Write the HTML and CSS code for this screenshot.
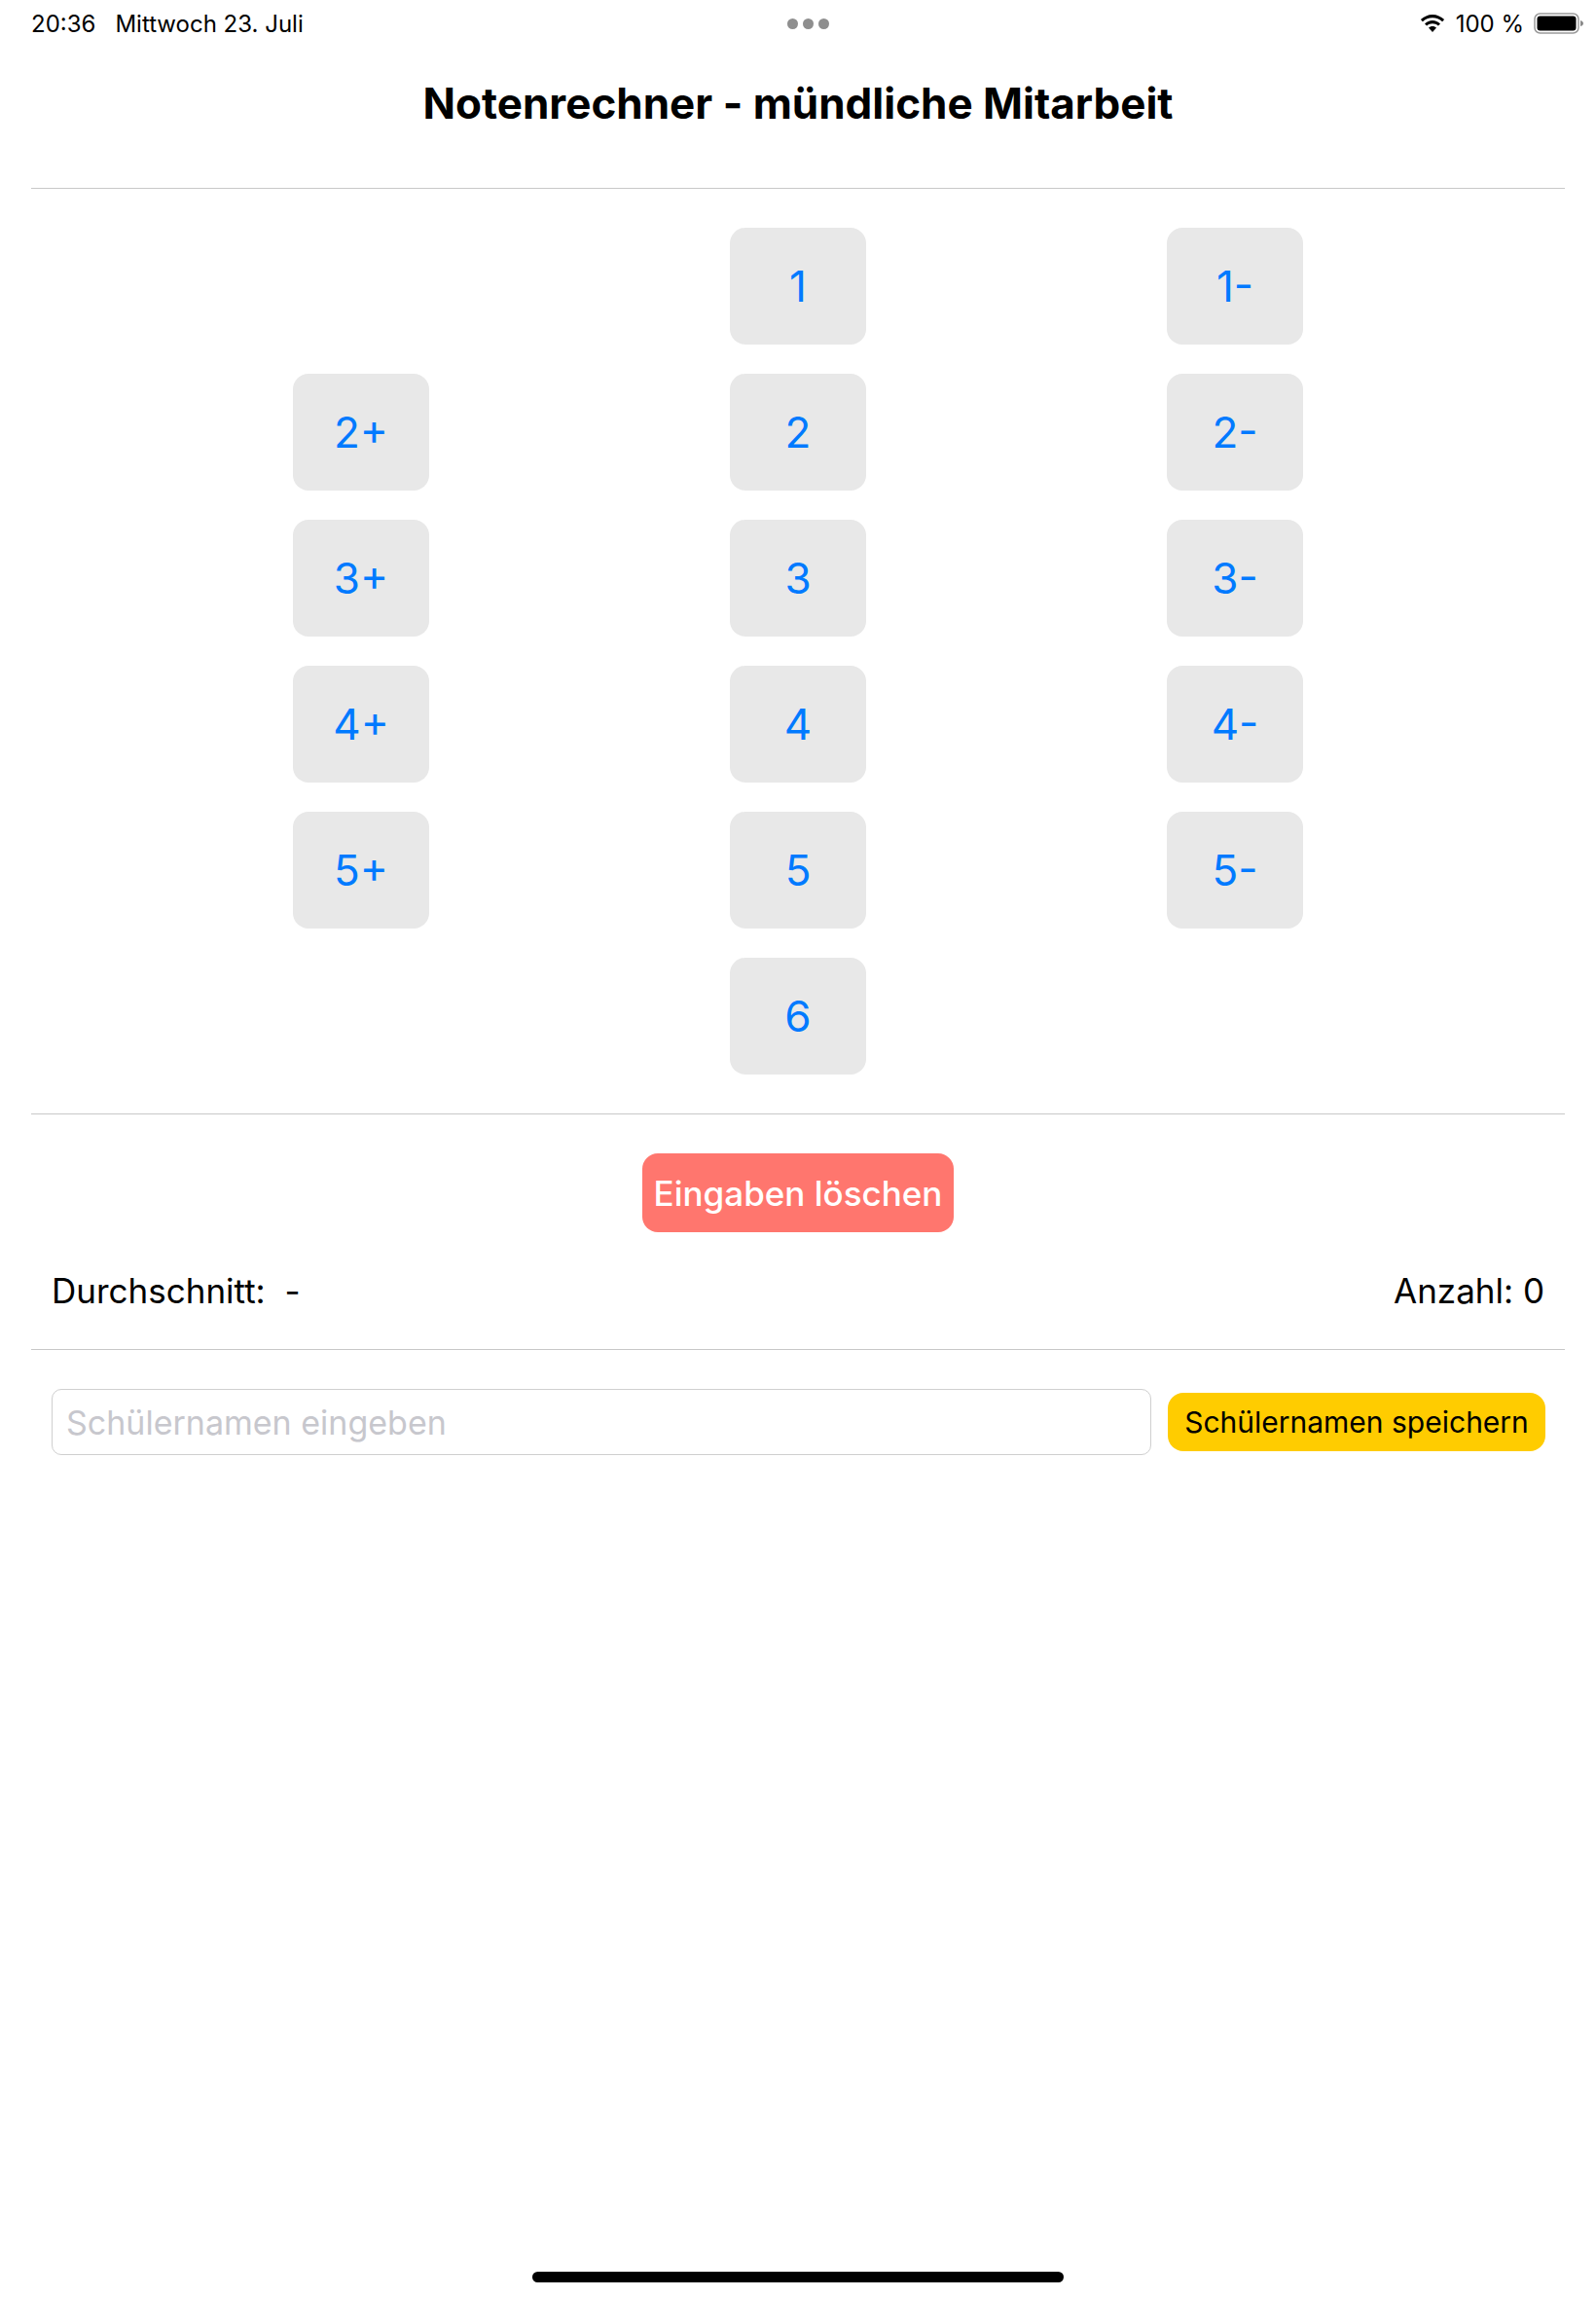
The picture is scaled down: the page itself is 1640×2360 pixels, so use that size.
FILE: index.html
```html
<!DOCTYPE html>
<html lang="de">
<head>
    <meta charset="UTF-8">
    <meta name="viewport" content="width=device-width, initial-scale=1.0">
    <title>Notenrechner</title>
    <link rel="stylesheet" href="styles.css">
</head>
<body>
    <div class="statusbar">
        <div class="status-left"><span>20:36</span><span>Mittwoch 23. Juli</span></div>
        <div class="status-dots"><i></i><i></i><i></i></div>
        <div class="status-right">
            <svg class="wifi" width="28" height="20" viewBox="0 0 28 20">
                <path d="M14 4.2c3.9 0 7.4 1.5 10.1 4l2-2.1C22.800 3 18.600 1 14 1S5.200 3 1.900 6.100l2 2.100c2.700-2.500 6.200-4 10.100-4z"/>
                <path d="M14 10.200c2.300 0 4.300.9 5.900 2.300l2.100-2.100C19.800 8.300 17 7 14 7s-5.800 1.300-8 3.400l2.100 2.100c1.600-1.400 3.600-2.300 5.900-2.300z"/>
                <path d="M14 13c-1.600 0-3 .6-4 1.600L14 19l4-4.400c-1-1-2.400-1.600-4-1.600z"/>
            </svg>
            <span>100 %</span>
            <svg class="battery" width="52" height="24" viewBox="0 0 52 24">
                <rect x="1" y="2" width="45" height="20" rx="5.500" fill="none" stroke="#9a9a9a" stroke-width="1.500"/>
                <rect x="3.500" y="4.500" width="40" height="15" rx="3"/>
                <path d="M48 9c1.800.5 3 1.500 3 3s-1.200 2.500-3 3z" fill="#8a8a8a"/>
            </svg>
        </div>
    </div>

    <div class="page">
        <h1 class="title">Notenrechner - mündliche Mitarbeit</h1>

        <div class="grades">
            <span></span><button class="grade">1</button><button class="grade">1-</button>
            <button class="grade">2+</button><button class="grade">2</button><button class="grade">2-</button>
            <button class="grade">3+</button><button class="grade">3</button><button class="grade">3-</button>
            <button class="grade">4+</button><button class="grade">4</button><button class="grade">4-</button>
            <button class="grade">5+</button><button class="grade">5</button><button class="grade">5-</button>
            <span></span><button class="grade">6</button><span></span>
        </div>

        <div class="results">
            <button class="clear">Eingaben löschen</button>
            <div class="stats">
                <span>Durchschnitt:&nbsp; -</span>
                <span>Anzahl: 0</span>
            </div>
        </div>

        <div class="namerow">
            <input class="nameinput" type="text" placeholder="Schülernamen eingeben">
            <button class="save">Schülernamen speichern</button>
        </div>
    </div>

    <div class="homebar"></div>
</body>
</html>
```

FILE: styles.css
```css
*{
    margin: 0;
    padding: 0;
    box-sizing: border-box;
}
body{
    display: flex;
    flex-direction: column;
    width: 100%;
    height: 100vh;
    background-color: #fff;
    color: #000;
    font-family: Inter, "Liberation Sans", sans-serif;
}
button, input{
    font-family: inherit;
    border: 0;
}

/* status bar */
.statusbar{
    display: grid;
    grid-template-columns: 1fr auto 1fr;
    align-items: center;
    height: 48px;
    padding: 0 12px 0 32px;
    font-size: 24px;
}
.status-left{
    display: flex;
    gap: 20px;
}
.status-dots{
    display: flex;
    gap: 5px;
}
.status-dots i{
    width: 11px;
    height: 11px;
    border-radius: 50%;
    background-color: #8e8e8e;
}
.status-right{
    display: flex;
    justify-content: flex-end;
    align-items: center;
    gap: 10px;
}

/* page */
.page{
    padding: 0 32px;
}
.title{
    height: 146px;
    padding-top: 28px;
    border-bottom: 1px solid #c8c8c8;
    text-align: center;
    font-size: 44px;
    line-height: 60px;
    font-weight: 700;
}

/* grade buttons */
.grades{
    display: grid;
    grid-template-columns: repeat(3, 140px);
    grid-auto-rows: 120px;
    justify-content: center;
    column-gap: 309px;
    row-gap: 30px;
    padding: 40px 0;
    border-bottom: 1px solid #c8c8c8;
}
.grade{
    border-radius: 16px;
    background-color: #e8e8e8;
    color: #007aff;
    font-size: 44px;
}

/* clear + stats */
.results{
    display: flex;
    flex-direction: column;
    align-items: center;
    padding-top: 40px;
    border-bottom: 1px solid #c8c8c8;
}
.clear{
    width: 320px;
    height: 81px;
    border-radius: 16px;
    background-color: #ff766e;
    color: #fff;
    font-size: 35px;
    font-weight: 500;
}
.stats{
    display: flex;
    justify-content: space-between;
    align-items: center;
    width: 100%;
    height: 120px;
    padding: 0 21px;
    font-size: 35px;
}

/* name row */
.namerow{
    display: flex;
    align-items: center;
    gap: 17px;
    padding: 40px 20px 0 21px;
}
.nameinput{
    flex: 1;
    height: 68px;
    padding: 0 14px;
    border: 1px solid #cfcfcf;
    border-radius: 10px;
    font-size: 34px;
}
.nameinput::placeholder{
    color: #c7c7cd;
    opacity: 1;
}
.save{
    width: 388px;
    height: 60px;
    border-radius: 16px;
    background-color: #fc0;
    color: #000;
    font-size: 30px;
}

.homebar{
    width: 546px;
    height: 11px;
    margin: auto auto 15px;
    border-radius: 6px;
    background-color: #000;
}
```
